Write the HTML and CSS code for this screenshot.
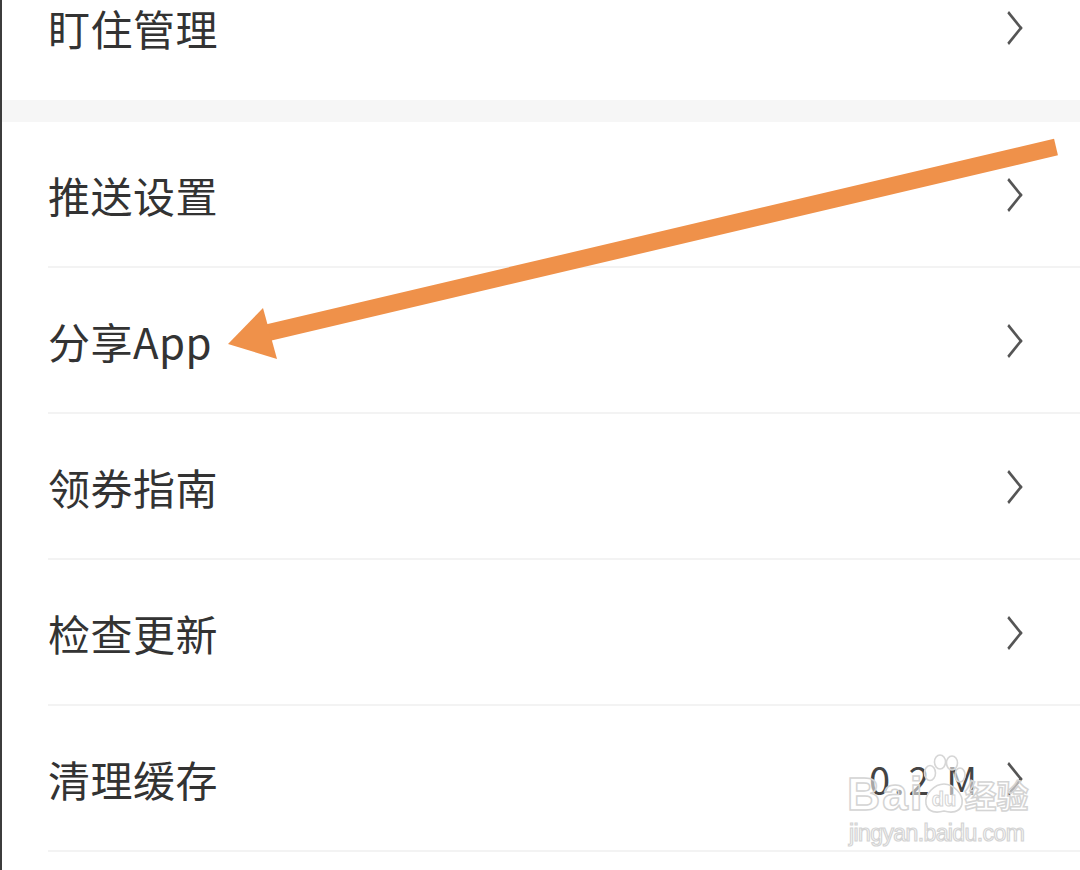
FILE: index.html
```html
<!DOCTYPE html>
<html lang="zh-CN">
<head>
    <meta charset="UTF-8">
    <meta name="viewport" content="width=device-width, initial-scale=1.0">
    <title>设置</title>
    <link rel="stylesheet" href="styles.css">
</head>
<body>
    <div class="page">
        <div class="group group-top">
            <div class="row">
                <span class="label">盯住管理</span>
                <span class="chevron"></span>
            </div>
        </div>

        <div class="gap"></div>

        <div class="group">
            <div class="row">
                <span class="label">推送设置</span>
                <span class="chevron"></span>
            </div>
            <div class="row">
                <span class="label">分享App</span>
                <span class="chevron"></span>
            </div>
            <div class="row">
                <span class="label">领券指南</span>
                <span class="chevron"></span>
            </div>
            <div class="row">
                <span class="label">检查更新</span>
                <span class="chevron"></span>
            </div>
            <div class="row">
                <span class="label">清理缓存</span>
                <span class="value">0.2 M</span>
                <span class="chevron"></span>
            </div>
        </div>

        <!-- annotation arrow -->
        <svg class="arrow" width="1080" height="870" viewBox="0 0 1080 870">
            <line x1="1056" y1="147" x2="258" y2="335" stroke="#ef914a" stroke-width="17"/>
            <polygon points="228,344 263,308 277,359" fill="#ef914a"/>
        </svg>

        <!-- watermark -->
        <div class="watermark">
            <div class="wm-logo">
                <span class="wm-bai">Bai</span>
                <svg class="wm-paw" width="46" height="62" viewBox="0 0 46 62">
                    <g fill="rgba(255,255,255,0.55)" stroke="#d6d6d6" stroke-width="1.6">
                        <ellipse cx="9" cy="19" rx="5.5" ry="7.5"/>
                        <ellipse cx="19" cy="8" rx="5.5" ry="7"/>
                        <ellipse cx="31" cy="9" rx="5.5" ry="7"/>
                        <ellipse cx="39" cy="21" rx="5" ry="7"/>
                        <path d="M5 50 C3 40 14 30 23 30 C32 30 43 40 41 50 C39 59 30 59 23 57 C16 59 7 59 5 50 Z"/>
                    </g>
                    <text x="23" y="52" text-anchor="middle" class="wm-du">du</text>
                </svg>
                <span class="wm-jy">经验</span>
            </div>
            <div class="wm-url">jingyan.baidu.com</div>
        </div>
    </div>
</body>
</html>
```

FILE: styles.css
```css
* {
    margin: 0;
    padding: 0;
    box-sizing: border-box;
}

html, body {
    width: 1080px;
    height: 870px;
    overflow: hidden;
    background: #fff;
}

body {
    font-family: "Noto Sans CJK SC", "Noto Sans", sans-serif;
    color: #333;
}

.page {
    position: relative;
    display: flow-root;
    height: 870px;
    border-left: 2px solid #3c3c3c;
}

.group-top {
    margin-top: -46px;
}

.row {
    height: 146px;
    margin-left: 46px;
    padding-right: 57px;
    display: flex;
    align-items: center;
    border-bottom: 2px solid #f3f3f3;
}

.group-top .row {
    border-bottom: none;
}

.label {
    flex: 1;
    font-size: 42px;
    letter-spacing: 0.5px;
    color: #333;
}

.value {
    font-size: 38px;
    letter-spacing: 4px;
    color: #444;
    margin-right: 22px;
}

.chevron {
    width: 20px;
    height: 34px;
    position: relative;
}

.chevron::before {
    content: "";
    position: absolute;
    left: -6px;
    top: 6px;
    width: 21px;
    height: 21px;
    border-top: 3px solid #555;
    border-right: 3px solid #555;
    transform: scaleX(0.8) rotate(45deg);
}

.gap {
    height: 22px;
    background: #f6f6f6;
}

.arrow {
    position: absolute;
    left: -2px;
    top: 0;
    pointer-events: none;
}

.watermark {
    position: absolute;
    left: 845px;
    top: 752px;
    font-family: "Liberation Sans", Arial, sans-serif;
    color: rgba(255, 255, 255, 0.55);
    -webkit-text-stroke: 1.5px #d4d4d4;
}

.wm-logo {
    display: flex;
    align-items: flex-end;
    height: 64px;
}

.wm-bai {
    font-size: 46px;
    font-weight: bold;
    line-height: 44px;
    letter-spacing: 2px;
}

.wm-paw {
    margin-left: -4px;
}

.wm-du {
    font-size: 20px;
    font-weight: bold;
    fill: rgba(255, 255, 255, 0.55);
    stroke: #d4d4d4;
    stroke-width: 1;
}

.wm-jy {
    font-family: "Noto Sans CJK SC", sans-serif;
    font-size: 32px;
    font-weight: bold;
    line-height: 44px;
    margin-left: -2px;
}

.wm-url {
    font-size: 23px;
    line-height: 30px;
    letter-spacing: -0.6px;
    margin-top: 2px;
    margin-left: 2px;
    -webkit-text-stroke: 1.2px #d4d4d4;
}
```
